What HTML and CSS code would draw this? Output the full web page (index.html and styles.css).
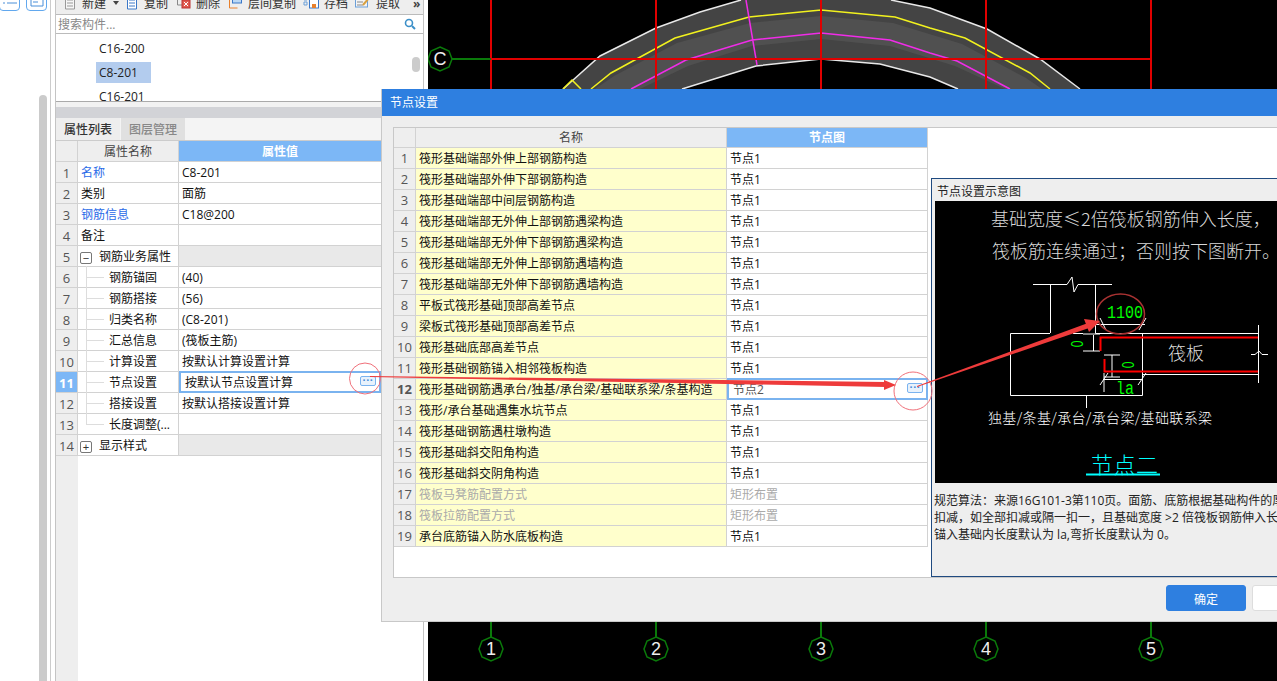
FILE: index.html
```html
<!DOCTYPE html>
<html lang="zh">
<head>
<meta charset="utf-8">
<title>节点设置</title>
<link rel="stylesheet" href="styles.css">
</head>
<body>
<div class="app">
  <aside class="rail">
    <div class="rail-buttons">
      <span class="rail-btn"><svg width="16" height="12" viewBox="0 0 16 12"><path d="M1 1h2M1 6h2M5 1h10M5 6h10" stroke="#4a8fd8" fill="none"/></svg></span>
      <span class="rail-btn"><svg width="16" height="12" viewBox="0 0 16 12"><path d="M2 0v9h12V0M4 2h8M4 5h5" stroke="#4a8fd8" fill="none"/></svg></span>
    </div>
    <div class="rail-scroll"></div>
    <div class="rail-line"></div>
  </aside>

  <section class="panel">
    <div class="toolbar">
      <span class="tool t1"><svg width="12" height="14" viewBox="0 0 12 14"><path d="M1.500 0v12h9V0M3 3h6M3 6h6M3 9h6" stroke="#999" fill="#f6f6f6"/></svg>新建<i class="caret"></i></span>
      <span class="tool t2"><svg width="12" height="14" viewBox="0 0 12 14"><path d="M1.500 0v12h9V0M3 3h6M3 6h6M3 9h6" stroke="#3b78c8" fill="#fff"/></svg>复制</span>
      <span class="tool t3"><svg width="15" height="14" viewBox="0 0 15 14"><path d="M1.500 0v8h6" stroke="#888" fill="none"/><rect x="6" y="3" width="8" height="8" fill="#e05a50" stroke="#b33"/><path d="M8 5l4 4M12 5l-4 4" stroke="#fff"/></svg>删除</span>
      <span class="tool t4"><svg width="15" height="14" viewBox="0 0 15 14"><path d="M1.500 2v9h8" stroke="#e8802c" fill="none"/><rect x="4.500" y="-3" width="9" height="9" fill="#bcd8f4" stroke="#3b78c8"/></svg>层间复制</span>
      <span class="tool t5"><svg width="16" height="14" viewBox="0 0 16 14"><path d="M1 0h3v3H1zM1 5h3v3H1z" fill="none" stroke="#6b9fd8"/><rect x="6.500" y="-2" width="9" height="13" fill="#fff" stroke="#3b78c8"/><rect x="9" y="7" width="4" height="4" fill="#e8802c"/></svg>存档</span>
      <span class="tool t6"><svg width="16" height="14" viewBox="0 0 16 14"><rect x="0.500" y="-2" width="12" height="12" fill="#f4f4f4" stroke="#6b9fd8"/><path d="M2 2h6M2 5h6M2 8h6" stroke="#888"/><path d="M8 8l6-7" stroke="#d8a040" stroke-width="2"/></svg>提取</span>
      <span class="more">»</span>
    </div>
    <div class="search">
      <span class="search-hint">搜索构件...</span>
      <svg class="search-icon" width="12" height="12" viewBox="0 0 12 12"><circle cx="5" cy="5" r="3.500" fill="none" stroke="#3b8fc8" stroke-width="1.600"/><path d="M8 8l3 3" stroke="#3b8fc8" stroke-width="2"/></svg>
    </div>
    <div class="tree">
      <div class="tree-item">C16-200</div>
      <div class="tree-item"><span class="tree-sel">C8-201</span></div>
      <div class="tree-item">C16-201</div>
      <div class="thumb"></div>
    </div>
    <div class="band"></div>
    <div class="tabs">
      <span class="tab on">属性列表</span>
      <span class="tab">图层管理</span>
    </div>
    <div class="props">
      <div class="row head"><span class="n"></span><span class="k">属性名称</span><span class="v hi">属性值</span></div>
      <div class="row"><span class="n">1</span><span class="k link">名称</span><span class="v">C8-201</span></div>
      <div class="row"><span class="n">2</span><span class="k">类别</span><span class="v">面筋</span></div>
      <div class="row"><span class="n">3</span><span class="k link">钢筋信息</span><span class="v">C18@200</span></div>
      <div class="row"><span class="n">4</span><span class="k">备注</span><span class="v"></span></div>
      <div class="row"><span class="n">5</span><span class="k"><i class="exp">−</i>钢筋业务属性</span><span class="v grp"></span></div>
      <div class="row"><span class="n">6</span><span class="k kid">钢筋锚固</span><span class="v">(40)</span></div>
      <div class="row"><span class="n">7</span><span class="k kid">钢筋搭接</span><span class="v">(56)</span></div>
      <div class="row"><span class="n">8</span><span class="k kid">归类名称</span><span class="v">(C8-201)</span></div>
      <div class="row"><span class="n">9</span><span class="k kid">汇总信息</span><span class="v">(筏板主筋)</span></div>
      <div class="row"><span class="n">10</span><span class="k kid">计算设置</span><span class="v">按默认计算设置计算</span></div>
      <div class="row"><span class="n hi">11</span><span class="k kid">节点设置</span><span class="v sel">按默认节点设置计算<i class="dots">···</i></span></div>
      <div class="row"><span class="n">12</span><span class="k kid">搭接设置</span><span class="v">按默认搭接设置计算</span></div>
      <div class="row"><span class="n">13</span><span class="k kid last">长度调整(...</span><span class="v"></span></div>
      <div class="row"><span class="n">14</span><span class="k"><i class="exp">+</i>显示样式</span><span class="v grp"></span></div>
      <div class="props-rest"></div>
    </div>
  </section>

  <main class="canvas">
    <svg class="cad" viewBox="428 0 849 681" width="849" height="681">
      <path class="slab" d="M563 89L600 56L656 28L700 12L741 0L816 -8L891 0L930 8L987 29L1040 59L1080 89L958 89L930 77L880 64L821 59L756 66L682 89Z"/>
      <path class="slab2" d="M595 89L614 76L677 43L750 23L821 16L893 23L962 44L1026 78L1042 89L1005 89L955 66L890 46L821 39L752 46L688 66L640 89Z"/>
      <path class="ln-w" d="M563 89L600 56L656 28L700 12L741 0M891 0L930 8L987 29L1040 59L1080 89M682 89L756 66L821 59L880 64L930 77L958 89"/>
      <path class="ln-y" d="M591 89L611 73L675 38L749 17L821 10L895 17L930 28L965 38L1030 73L1050 89M563 89L572 80L581 89"/>
      <path class="ln-m" d="M631 89L686 60L752 40L821 33L890 40L930 53L957 61L1010 89M746 0L757 65"/>
      <path class="ln-r" d="M491 0V89M656 0V89M821 0V89M986 0V89M1151 0V89M491 59H1151"/>
      <path class="ln-g" d="M428 59H491M491 622V637M656 622V637M821 622V637M986 622V637M1151 622V637"/>
      <g class="axis">
        <polygon points="440,47 449,51 452,59 449,67 440,71 431,67 428,59 431,51"/>
        <polygon points="491,637 500,641 503,649 500,657 491,661 482,657 479,649 482,641"/>
        <polygon points="656,637 665,641 668,649 665,657 656,661 647,657 644,649 647,641"/>
        <polygon points="821,637 830,641 833,649 830,657 821,661 812,657 809,649 812,641"/>
        <polygon points="986,637 995,641 998,649 995,657 986,661 977,657 974,649 977,641"/>
        <polygon points="1151,637 1160,641 1163,649 1160,657 1151,661 1142,657 1139,649 1142,641"/>
      </g>
      <g class="axis-txt">
        <text x="440" y="65">C</text>
        <text x="491" y="655">1</text>
        <text x="656" y="655">2</text>
        <text x="821" y="655">3</text>
        <text x="986" y="655">4</text>
        <text x="1151" y="655">5</text>
      </g>
    </svg>
  </main>

  <div class="dialog">
    <header class="dlg-title">节点设置</header>
    <div class="sheet">
      <div class="nodes">
        <div class="nrow nhead"><span class="nn"></span><span class="nk">名称</span><span class="nv hi">节点图</span></div>
        <div class="nrow"><span class="nn">1</span><span class="nk">筏形基础端部外伸上部钢筋构造</span><span class="nv">节点1</span></div>
        <div class="nrow"><span class="nn">2</span><span class="nk">筏形基础端部外伸下部钢筋构造</span><span class="nv">节点1</span></div>
        <div class="nrow"><span class="nn">3</span><span class="nk">筏形基础端部中间层钢筋构造</span><span class="nv">节点1</span></div>
        <div class="nrow"><span class="nn">4</span><span class="nk">筏形基础端部无外伸上部钢筋遇梁构造</span><span class="nv">节点1</span></div>
        <div class="nrow"><span class="nn">5</span><span class="nk">筏形基础端部无外伸下部钢筋遇梁构造</span><span class="nv">节点1</span></div>
        <div class="nrow"><span class="nn">6</span><span class="nk">筏形基础端部无外伸上部钢筋遇墙构造</span><span class="nv">节点1</span></div>
        <div class="nrow"><span class="nn">7</span><span class="nk">筏形基础端部无外伸下部钢筋遇墙构造</span><span class="nv">节点1</span></div>
        <div class="nrow"><span class="nn">8</span><span class="nk">平板式筏形基础顶部高差节点</span><span class="nv">节点1</span></div>
        <div class="nrow"><span class="nn">9</span><span class="nk">梁板式筏形基础顶部高差节点</span><span class="nv">节点1</span></div>
        <div class="nrow"><span class="nn">10</span><span class="nk">筏形基础底部高差节点</span><span class="nv">节点1</span></div>
        <div class="nrow"><span class="nn">11</span><span class="nk">筏形基础钢筋锚入相邻筏板构造</span><span class="nv">节点1</span></div>
        <div class="nrow"><span class="nn hi">12</span><span class="nk">筏形基础钢筋遇承台/独基/承台梁/基础联系梁/条基构造</span><span class="nv sel">节点2<i class="dots">···</i></span></div>
        <div class="nrow"><span class="nn">13</span><span class="nk">筏形/承台基础遇集水坑节点</span><span class="nv">节点1</span></div>
        <div class="nrow"><span class="nn">14</span><span class="nk">筏形基础钢筋遇柱墩构造</span><span class="nv">节点1</span></div>
        <div class="nrow"><span class="nn">15</span><span class="nk">筏形基础斜交阳角构造</span><span class="nv">节点1</span></div>
        <div class="nrow"><span class="nn">16</span><span class="nk">筏形基础斜交阴角构造</span><span class="nv">节点1</span></div>
        <div class="nrow off"><span class="nn">17</span><span class="nk">筏板马凳筋配置方式</span><span class="nv">矩形布置</span></div>
        <div class="nrow off"><span class="nn">18</span><span class="nk">筏板拉筋配置方式</span><span class="nv">矩形布置</span></div>
        <div class="nrow"><span class="nn">19</span><span class="nk">承台底筋锚入防水底板构造</span><span class="nv">节点1</span></div>
      </div>
      <div class="preview">
        <div class="preview-title">节点设置示意图</div>
        <svg class="shot" viewBox="935 201 342 282" width="342" height="282">
          <rect x="935" y="201" width="342" height="282" fill="#000"/>
          <g class="shot-head">
            <text x="991" y="226">基础宽度≤2倍筏板钢筋伸入长度，</text>
            <text x="992" y="258">筏板筋连续通过；否则按下图断开。</text>
          </g>
          <path class="d-w" d="M1033 284.500H1067L1072 277L1074 292L1078 284.500H1112M1050.500 284V333M1095.500 284V333.500H1258M1010.500 333.500H1050M1073 333.500H1083M1010.500 333.500V395.500H1142.500V333.500M1142 374.500H1258M1258.500 325V383M1251 354.500H1255L1259 351L1262 354.500H1268M1086.500 395V408M1095 324.500H1145M1100 318L1106 330M1139 330L1146 318M1093.500 335V351M1083 334H1100M1083 351H1100M1112 355V377M1104 355H1120M1104 377H1120M1103 379.500H1143M1100 385L1108 373M1138 385L1146 373M1104 373V392"/>
          <path class="d-r" d="M1100.500 351V337.500H1258M1104.500 359V371.500H1258"/>
          <g class="d-g">
            <text x="1107" y="318" textLength="36" lengthAdjust="spacingAndGlyphs">1100</text>
            <text x="1116" y="394" textLength="18" lengthAdjust="spacingAndGlyphs">la</text>
            <text class="side" transform="translate(1083 344) rotate(-90) scale(.75 1)">0</text>
            <text class="side" transform="translate(1134 365) rotate(-90) scale(.75 1)">0</text>
          </g>
          <text class="d-board" x="1168" y="360">筏板</text>
          <text class="d-cap" x="988" y="423" textLength="224">独基/条基/承台/承台梁/基础联系梁</text>
          <text class="d-title" x="1091" y="473" textLength="67">节点二</text>
          <path class="d-c" d="M1086 474.500H1160"/>
        </svg>
        <div class="preview-text">
          <p>规范算法：来源16G101-3第110页。面筋、底筋根据基础构件的厚度</p>
          <p>扣减，如全部扣减或隔一扣一，且基础宽度 &gt;2 倍筏板钢筋伸入长度</p>
          <p>锚入基础内长度默认为 la,弯折长度默认为 0。</p>
        </div>
      </div>
    </div>
    <footer class="dlg-foot">
      <span class="btn primary">确定</span>
      <span class="btn"></span>
    </footer>
  </div>

  <svg class="marks" viewBox="0 0 1277 681" width="1277" height="681">
    <circle class="m-ring" cx="365" cy="378.500" r="15.500"/>
    <circle class="m-ring" cx="913" cy="391" r="19"/>
    <ellipse class="m-dark" cx="1120.500" cy="314" rx="24" ry="20"/>
    <polygon class="m-head" points="370,376 886,382 886,387 370,377"/>
    <polygon class="m-head" points="896,385 884,380 884,390"/>
    <polygon class="m-head" points="917,386 1088,323 1089,328 917,387"/>
    <polygon class="m-head" points="1100,321 1084,319 1089,332"/>
  </svg>
</div>
</body>
</html>
```
FILE: styles.css
```css
* { box-sizing: border-box; }
html, body { margin: 0; height: 100%; overflow: hidden; background: #fff; }
body { font: 12px/17px "Open Sans", "Noto Sans CJK SC", sans-serif; color: #111; }
.app { position: relative; display: flex; width: 1277px; height: 681px; overflow: hidden; }

/* left rail */
.rail { position: relative; flex: 0 0 55px; }
.rail-buttons { display: flex; gap: 6px; margin: -6px 0 0 -1px; }
.rail-btn { display: flex; align-items: flex-end; justify-content: center; width: 21px; height: 17px; padding-bottom: 1px; border: 1px solid #62a8ee; border-radius: 4px; background: #fff; }
.rail-scroll { position: absolute; left: 39px; top: 95px; bottom: 0; width: 8px; background: #cbcbcb; border-radius: 4px 4px 0 0; }
.rail-line { position: absolute; left: 50px; top: 0; bottom: 0; width: 1px; background: #ccc; }

/* component panel */
.panel { display: flex; flex-direction: column; flex: 0 0 369px; height: 681px; border-left: 1px solid #c4c4c4; border-right: 1px solid #c4c4c4; background: #fff; }
.toolbar { position: relative; flex: 0 0 15px; background: #eee; border-bottom: 1px solid #bbb; overflow: hidden; }
.tool { position: absolute; top: -6px; display: flex; align-items: center; gap: 6px; height: 18px; color: #333; white-space: nowrap; }
.tool svg { flex: none; margin-top: 1px; }
.t1 { left: 8px; } .t2 { left: 70px; } .t3 { left: 120px; } .t4 { left: 172px; } .t5 { left: 247px; } .t6 { left: 299px; }
.t3, .t4, .t5, .t6 { gap: 5px; }
.caret { width: 0; height: 0; margin-left: 1px; border: 3px solid transparent; border-top: 4px solid #444; border-bottom: 0; }
.more { position: absolute; left: 357px; top: -5px; font-weight: 700; color: #444; }
.search { position: relative; flex: 0 0 19px; padding: 1px 0 0 2px; border-bottom: 1px solid #bbb; line-height: 17px; color: #888; }
.search-icon { position: absolute; right: 7px; top: 3px; }
.tree { position: relative; flex: 0 0 68px; padding-top: 3px; border-bottom: 1px solid #aaa; overflow: hidden; }
.tree-item { height: 24px; padding-left: 43px; line-height: 23px; color: #222; }
.tree-sel { display: inline-block; width: 55px; height: 21px; margin-left: -3px; padding-left: 3px; line-height: 21px; background: #b3ccee; }
.thumb { position: absolute; right: 3px; top: 23px; width: 8px; height: 15px; border-radius: 4px; background: #ccc; }
.band { flex: 0 0 16px; border-top: 5px solid #f2f2f2; background: #d2d3d7; }
.tabs { display: flex; flex: 0 0 23px; min-height: 0; gap: 1px; background: #f4f4f4; border-bottom: 1px solid #ccc; }
.tab { width: 64px; height: 22px; padding: 1px 0 0 8px; line-height: 22px; font-weight: 500; color: #888; background: #e0e0e0; overflow: hidden; }
.tab.on { color: #333; background: #eee; }

/* property table */
.props { display: flex; flex-direction: column; flex: 1; width: 325px; }
.row { display: flex; flex: 0 0 21px; min-height: 0; width: 325px; border-bottom: 1px solid #d2d2d2; line-height: 22px; }
.n { flex: 0 0 22px; border-right: 1px solid #d2d2d2; background: #eee; text-align: center; font-size: 13px; color: #555; }
.k { position: relative; flex: 0 0 101px; padding-left: 3px; border-right: 1px solid #d2d2d2; white-space: nowrap; }
.v { flex: 1; padding-left: 3px; position: relative; white-space: nowrap; }
.link { color: #2a6be8; }
.head .k { padding-left: 0; padding-right: 0; text-align: center; color: #444; background: #eee; }
.hi { color: #fff; font-weight: 700; background: #7cb7f6; text-align: center; padding-left: 0; padding-right: 0; }
.grp { background: #e9e9e9; }
.exp { display: inline-block; width: 12px; height: 12px; margin: 0 7px 0 -1px; border: 1px solid #777; border-radius: 2px; font: 11px/10px "Liberation Sans", sans-serif; text-align: center; color: #333; vertical-align: -1px; }
.kid { padding-left: 31px; }
.kid::before { content: ""; position: absolute; left: 8px; top: -1px; width: 17px; height: 11px; border-left: 1px solid #ddd; border-bottom: 1px solid #ddd; }
.kid::after { content: ""; position: absolute; left: 8px; top: 10px; bottom: -1px; border-left: 1px solid #ddd; }
.kid.last::after { display: none; }
.row > .sel { margin: -1px 0 -1px; padding: 0 0 0 4px; border: 2px solid #7ab3ef; line-height: 20px; }
.dots { position: absolute; right: 3px; top: 3px; width: 16px; height: 10px; border: 1px solid #7ab3ef; border-radius: 2px; background: #e8f2fc; font: 700 11px/6px "Liberation Sans", sans-serif; letter-spacing: 0; text-align: center; color: #4a8fd8; }
.props-rest { flex: 1; width: 22px; background: #eee; }

/* CAD canvas */
.canvas { flex: 1; margin-left: 4px; background: #000; overflow: hidden; }
.cad { display: block; }
.cad path, .cad polygon { fill: none; }
.cad .slab { fill: #444; }
.cad .slab2 { fill: #505050; }
.ln-w { stroke: #e8e8e8; stroke-width: 1.500; }
.ln-y { stroke: #f2f21e; stroke-width: 1.500; }
.ln-m { stroke: #f02ce8; stroke-width: 1.500; }
.ln-r { stroke: #e00000; stroke-width: 2; }
.ln-g { stroke: #0a7a0a; stroke-width: 2; }
.axis polygon { stroke: #0a7a0a; stroke-width: 1.500; fill: #000; }
.axis-txt text { fill: #eee; font: 18px "Liberation Sans", sans-serif; text-anchor: middle; }

/* dialog */
.dialog { position: absolute; left: 381px; top: 89px; display: flex; flex-direction: column; width: 897px; height: 533px; border-left: 1px solid #c8c8c8; border-bottom: 1px solid #c8c8c8; background: #eee; overflow: hidden; }
.dlg-title { flex: 0 0 27px; padding-left: 8px; line-height: 27px; color: #fff; background: #2e7fe0; }
.sheet { display: flex; margin: 11px 0 0 11px; width: 884px; height: 451px; border: 1px solid #c8c8c8; border-right: 0; background: #fff; }
.nodes { flex: 0 0 534px; }
.nrow { display: flex; height: 21px; line-height: 21px; border-bottom: 1px solid #d2d2d2; }
.nhead { height: 20px; line-height: 20px; }
.nn { flex: 0 0 22px; border-right: 1px solid #d2d2d2; background: #eee; text-align: center; font-size: 13px; color: #555; }
.nk { flex: 0 0 311px; padding-left: 3px; border-right: 1px solid #d2d2d2; background: #ffc; white-space: nowrap; }
.nv { position: relative; flex: 1; padding-left: 3px; border-right: 1px solid #d2d2d2; }
.nhead .nk { padding: 0; text-align: center; color: #444; background: #eee; }
.nv.hi { padding: 0; }
.nv.sel { margin: -1px 0; padding-left: 4px; color: #555; border: 2px solid #7ab3ef; line-height: 19px; }
.off .nk, .off .nv { color: #aaa; }
.preview { display: flex; flex-direction: column; flex: 1; margin: 50px 0 0 3px; border: 1px solid #1f4a80; border-right: 0; background: #eee; overflow: hidden; }
.preview-title { flex: 0 0 22px; min-height: 0; padding-left: 5px; line-height: 25px; color: #222; }
.shot { display: block; flex: none; margin-left: 3px; }
.shot-head text { fill: #d8d8d8; font: 300 18px "Noto Sans CJK SC", sans-serif; }
.d-w { fill: none; stroke: #fff; stroke-width: 1; }
.d-r { fill: none; stroke: #f00; stroke-width: 2; }
.d-c { fill: none; stroke: #0ff; stroke-width: 2; }
.d-g text { fill: #0f0; font: 18px "Liberation Mono", monospace; }
.d-g .side { font: 16px "Liberation Sans", sans-serif; text-anchor: middle; }
.d-board { fill: #ddd; font: 300 18px "Noto Sans CJK SC", sans-serif; }
.d-cap { fill: #fff; font: 300 14px "Noto Sans CJK SC", sans-serif; }
.d-title { fill: #0ff; font: 300 22px "Noto Sans CJK SC", sans-serif; }
.preview-text { padding: 9px 0 0 2px; white-space: nowrap; color: #222; }
.preview-text p { margin: 0; }
.dlg-foot { display: flex; gap: 6px; padding: 7px 0 0 784px; }
.btn { flex: none; width: 80px; height: 26px; border: 1px solid #ddd; border-radius: 3px; background: #fff; text-align: center; line-height: 27px; }
.btn.primary { border-color: #2e7fe0; color: #fff; background: #2e7fe0; }

/* red hand annotations */
.marks { position: absolute; left: 0; top: 0; pointer-events: none; }
.m-ring { fill: none; stroke: #f0707a; stroke-width: 1; }
.m-dark { fill: none; stroke: #a83232; stroke-width: 1.500; }
.m-head { fill: #ee3b3b; }
```
